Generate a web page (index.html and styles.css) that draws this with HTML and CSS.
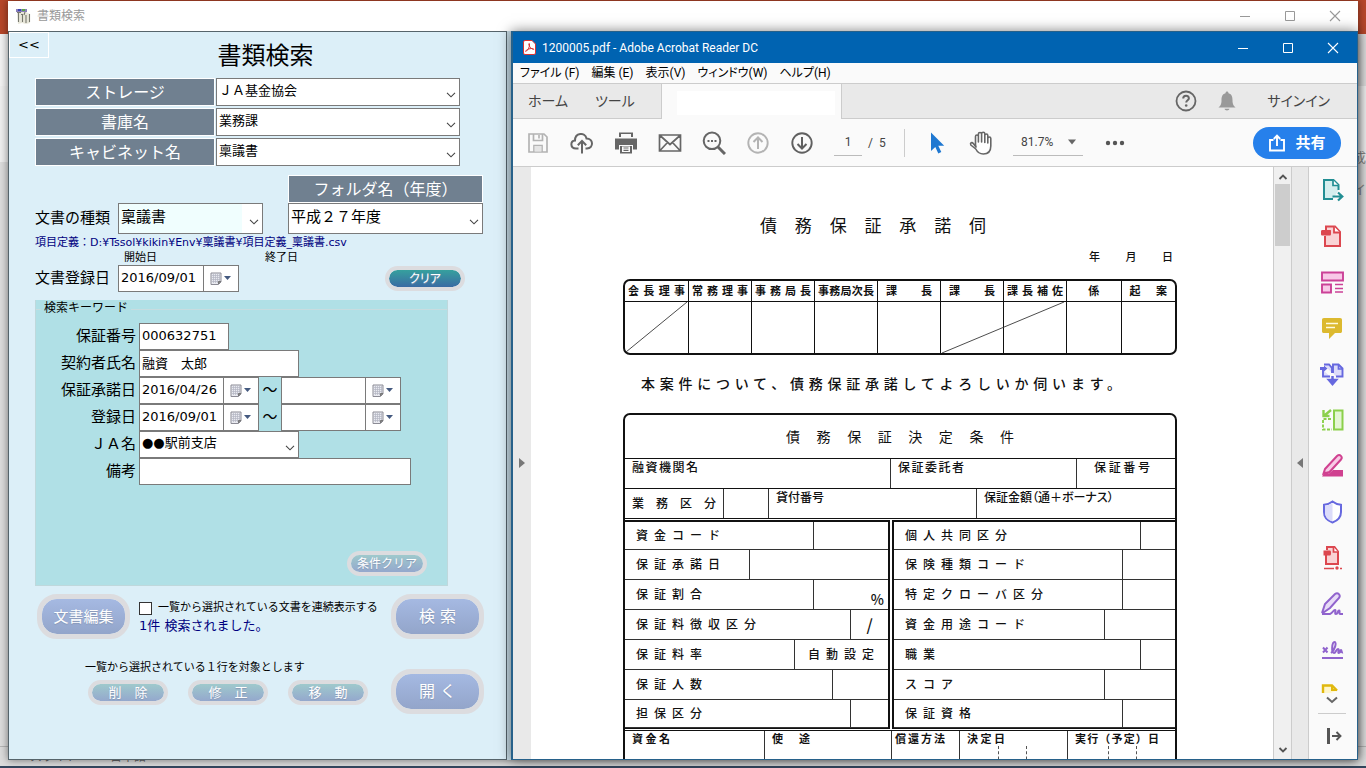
FILE: index.html
```html
<!DOCTYPE html>
<html lang="ja">
<head>
<meta charset="utf-8">
<title>書類検索</title>
<link rel="stylesheet" href="styles.css">
</head>
<body>
<svg class="defs" aria-hidden="true">
  <symbol id="chev" viewBox="0 0 10 6"><path d="M1 .8l4 4 4-4" fill="none" stroke="#444" stroke-width="1.1"/></symbol>
  <symbol id="cal" viewBox="0 0 22 13">
    <path d="M1 1h10v9l-2.500 2.500H1z" fill="#e9eaf0" stroke="#8b8b95"/><path d="M3.500 2v9M5.500 2v9M7.500 2v9M9.500 2v7M2 3.500h8M2 5.500h8M2 7.500h8M2 9.500h7" stroke="#b3b4c2" stroke-width=".7"/><path d="M11 9.500H8.500V12" fill="#777" stroke="#777"/><path d="M14 4h7l-3.500 4z" fill="#44597f"/>
  </symbol>
  <symbol id="min" viewBox="0 0 12 12"><path d="M1 6.500h10" stroke="currentColor"/></symbol>
  <symbol id="max" viewBox="0 0 12 12"><path d="M1.500 1.500h9v9h-9z" fill="none" stroke="currentColor"/></symbol>
  <symbol id="close" viewBox="0 0 12 12"><path d="M1 1l10 10M11 1L1 11" stroke="currentColor" stroke-width="1.100"/></symbol>
</svg>

<div class="desktop">
  <div class="back">
    <div class="back-title"></div>
    <div class="back-ribbon"></div>
    <div class="back-body"><span>成</span><span>イ</span></div>
    <div class="back-status"><span>スライド</span><span>日本語</span></div>
    <div class="taskbar"></div>
  </div>

  <section class="win app">
    <header class="app-bar">
      <svg class="app-icon" width="15" height="15" viewBox="0 0 15 15"><path d="M0 0h11v3H0z" fill="#8a7fb8"/><path d="M2 0h3v2H2z" fill="#3a45b5"/><path d="M6 0h3v2H6z" fill="#59a746"/><path d="M1 3h9l4 2v9l-4 1-4-1-4 1z" fill="#e8e7da"/><path d="M1 3.500h4M2.500 3.500V13M5 5.500h2M6.500 5v8M9 3l-1 3M10 6v8M13.500 5v8" stroke="#77786e" stroke-width="1.100" fill="none"/></svg>
      <span class="app-name">書類検索</span>
      <span class="controls"><svg><use href="#min"/></svg><svg><use href="#max"/></svg><svg><use href="#close"/></svg></span>
    </header>
    <form class="panel">
      <div class="head"><button type="button" class="collapse">&lt;&lt;</button><h1>書類検索</h1></div>

      <div class="places">
        <label for="storage" class="tag">ストレージ</label>
        <span class="combo"><select id="storage"><option>ＪＡ基金協会</option></select><svg><use href="#chev"/></svg></span>
        <label for="vault" class="tag">書庫名</label>
        <span class="combo"><select id="vault"><option>業務課</option></select><svg><use href="#chev"/></svg></span>
        <label for="cabinet" class="tag">キャビネット名</label>
        <span class="combo"><select id="cabinet"><option>稟議書</option></select><svg><use href="#chev"/></svg></span>
      </div>

      <div class="kind">
        <label for="kind" class="lead">文書の種類</label>
        <span class="combo tall kind-box"><select id="kind" class="mint"><option>稟議書</option></select><svg><use href="#chev"/></svg></span>
        <div class="folder">
          <label for="folder" class="tag">フォルダ名（年度）</label>
          <span class="combo tall"><select id="folder"><option>平成２７年度</option></select><svg><use href="#chev"/></svg></span>
        </div>
      </div>
      <p class="path">項目定義：D:¥Tssol¥kikin¥Env¥稟議書¥項目定義_稟議書.csv</p>
      <div class="range-heads"><span>開始日</span><span>終了日</span></div>
      <div class="reg">
        <label for="reg" class="lead">文書登録日</label>
        <span class="date"><input id="reg" value="2016/09/01"><button type="button" aria-label="カレンダー"><svg><use href="#cal"/></svg></button></span>
        <button type="button" class="pill live">クリア</button>
      </div>

      <fieldset class="keys">
        <legend>検索キーワード</legend>
        <div class="row"><label for="k1">保証番号</label><input id="k1" class="box w1" value="000632751"></div>
        <div class="row"><label for="k2">契約者氏名</label><input id="k2" class="box w2" value="融資　太郎"></div>
        <div class="row"><label for="k3">保証承諾日</label><span class="date"><input id="k3" value="2016/04/26"><button type="button" aria-label="カレンダー"><svg><use href="#cal"/></svg></button></span><span class="tilde">～</span><span class="date"><input aria-label="保証承諾日 終了"><button type="button" aria-label="カレンダー"><svg><use href="#cal"/></svg></button></span></div>
        <div class="row"><label for="k4">登録日</label><span class="date"><input id="k4" value="2016/09/01"><button type="button" aria-label="カレンダー"><svg><use href="#cal"/></svg></button></span><span class="tilde">～</span><span class="date"><input aria-label="登録日 終了"><button type="button" aria-label="カレンダー"><svg><use href="#cal"/></svg></button></span></div>
        <div class="row"><label for="k5">ＪＡ名</label><span class="combo w2"><select id="k5"><option>●●駅前支店</option></select><svg><use href="#chev"/></svg></span></div>
        <div class="row"><label for="k6">備考</label><input id="k6" class="box w3"></div>
        <button type="button" class="pill cond">条件クリア</button>
      </fieldset>

      <div class="acts">
        <button type="button" class="pill big edit">文書編集</button>
        <div class="notes">
          <label class="tick"><input type="checkbox">一覧から選択されている文書を連続表示する</label>
          <p class="found">1件 検索されました。</p>
        </div>
        <button type="button" class="pill big">検 索</button>
      </div>
      <div class="acts second">
        <div class="single">
          <p>一覧から選択されている１行を対象とします</p>
          <div class="trio"><button type="button" class="pill">削　除</button><button type="button" class="pill">修　正</button><button type="button" class="pill">移　動</button></div>
        </div>
        <button type="button" class="pill big">開 く</button>
      </div>
    </form>
  </section>

  <section class="win reader">
    <header class="reader-bar">
      <svg width="13" height="15" viewBox="0 0 13 15"><path d="M2 .5h7l3.500 3.500v9a1.500 1.500 0 01-1.500 1.500H2A1.500 1.500 0 01.5 13V2A1.500 1.500 0 012 .5z" fill="#fff" stroke="#d33"/><path d="M3 11.500c2-1.500 4-5 3.500-7.500 0-1-1-.5-.7.5.6 2.500 2.700 4.500 4.700 5 .8-.3-.2-1.200-2-1-2 .1-4 .8-5.200 1.800-.8.700-.8 1.200-.3 1.200z" fill="none" stroke="#d33"/></svg>
      <span>1200005.pdf - Adobe Acrobat Reader DC</span>
      <span class="controls"><svg><use href="#min"/></svg><svg><use href="#max"/></svg><svg><use href="#close"/></svg></span>
    </header>
    <nav class="menu"><span>ファイル (F)</span><span>編集 (E)</span><span>表示(V)</span><span>ウィンドウ(W)</span><span>ヘルプ(H)</span></nav>
    <div class="tabs">
      <div class="tab-left"><span>ホーム</span><span>ツール</span></div>
      <div class="tab-open"><div></div></div>
      <div class="tab-right">
        <svg width="22" height="22" viewBox="0 0 22 22"><circle cx="11" cy="11" r="9.500" fill="none" stroke="#666" stroke-width="1.800"/><path d="M8.200 8.600c0-3.700 5.700-3.700 5.700-.3 0 2-2.700 2-2.700 4.300" fill="none" stroke="#666" stroke-width="2"/><circle cx="11.200" cy="15.500" r="1.300" fill="#666"/></svg>
        <svg width="18" height="20" viewBox="0 0 18 20"><path d="M7.500 2.200C7.500 0 10.500 0 10.500 2.200c3.500 1 4 4 4 7 0 4 1 5.300 3 7.300H.5c2-2 3-3.300 3-7.300 0-3 .5-6 4-7zM6.500 17.800h5c-.5 2.200-4.500 2.200-5 0z" fill="#999"/></svg>
        <span>サインイン</span>
      </div>
    </div>
    <div class="tools">
      <svg viewBox="0 0 24 24"><path d="M3 3h15l3 3v15H3zM7.500 3v6.500h9V3M8 21v-6.500h8V21" fill="none" stroke="#b3b3b3" stroke-width="1.700"/><path d="M8.500 15h7v5.500h-7z" fill="#e5e5e5"/><path d="M13 4v3.500" stroke="#b3b3b3" stroke-width="1.600"/></svg>
      <svg viewBox="0 0 24 24"><path d="M8.500 17.500H6C0 17.500 0 10 5 9.500 5 2 15 .5 16.500 7.500c7 0 7.500 9.500.5 10h-1.500" fill="none" stroke="#666" stroke-width="2"/><path d="M12 22.500V10.500M7.800 14.300L12 10l4.200 4.300" fill="none" stroke="#666" stroke-width="2"/></svg>
      <svg viewBox="0 0 24 24"><path d="M5 1.500h14V6H5zM1 7.500h22v11h-4V14H5v4.500H1zM6 15h12v7.500H6z" fill="#666"/><path d="M7 3h10v4H7zM8 15.500h8V21H8z" fill="#fafafa"/><path d="M9.500 17h5M9.500 19.300h5" stroke="#666" stroke-width="1.200"/></svg>
      <svg viewBox="0 0 24 24"><path d="M1.500 4h21v16h-21zM2 4.500l10 9 10-9M2 19.500l7.500-8M22 19.500l-7.500-8" fill="none" stroke="#666" stroke-width="1.700"/></svg>
      <svg viewBox="0 0 24 24"><circle cx="10" cy="9.800" r="8.300" fill="none" stroke="#666" stroke-width="2"/><path d="M16 16l7 7" stroke="#666" stroke-width="3"/><path d="M5.500 9h2v2h-2zM9 9h2v2H9zM12.500 9h2v2h-2z" fill="#666"/></svg>
      <svg viewBox="0 0 24 24"><circle cx="12" cy="12" r="9.700" fill="none" stroke="#b3b3b3" stroke-width="1.900"/><path d="M12 18V7M7.500 11L12 6.500l4.500 4.500" fill="none" stroke="#b3b3b3" stroke-width="2"/></svg>
      <svg viewBox="0 0 24 24"><circle cx="12" cy="12" r="9.700" fill="none" stroke="#606060" stroke-width="1.900"/><path d="M12 6v11M7.500 13l4.500 4.500 4.500-4.500" fill="none" stroke="#606060" stroke-width="2"/></svg>
      <input class="page-no" aria-label="ページ" value="1"><span class="of">/&nbsp; 5</span>
      <span class="bar"></span>
      <svg viewBox="0 0 24 24"><path d="M6 1.500v18.500l4.300-4 3 6.500 3-1.400-3-6.300h5.900z" fill="#1f78d1"/></svg>
      <svg viewBox="0 0 24 24"><path d="M6.500 14V5.500c0-2 2.900-2 2.900 0V11 3c0-2 3.200-2 3.200 0v8V2.800c0-2 3.200-2 3.200 0V11.500 4.500c0-2 3-2 3 0V12 7.500c0-2 3-2 3 0V15c0 5-2.500 8-7.500 8-4.500 0-6-2-7.500-5L1.800 14c-1-2.200 1.200-3.200 2.500-1.600L7 16z" fill="#fff" stroke="#666" stroke-width="1.600" stroke-linejoin="round"/></svg>
      <span class="zoom">81.7%<svg viewBox="0 0 10 6"><path d="M1 .5h8L5 5.500z" fill="#666"/></svg></span>
      <svg viewBox="0 0 24 24"><g fill="#555"><circle cx="5" cy="12" r="2.200"/><circle cx="12" cy="12" r="2.200"/><circle cx="19" cy="12" r="2.200"/></g></svg>
      <button type="button" class="share"><svg viewBox="0 0 18 18"><path d="M5.500 6H2v10.500h14V6h-3.500M9 12V2M5.800 5L9 1.700 12.200 5" fill="none" stroke="#fff" stroke-width="1.900"/></svg>共有</button>
    </div>

    <div class="view">
      <div class="strip"><svg viewBox="0 0 6 10"><path d="M0 0v10l6-5z" fill="#777"/></svg></div>
      <main class="paper">
        <div class="sheet">
          <h2 class="spread doc-title">債務保証承諾伺</h2>
          <p class="spread doc-date">年月日</p>
          <table class="stamps">
            <colgroup><col span="7" class="c-wide"><col span="2" class="c-slim"></colgroup>
            <tr><th><div class="spread">会長理事</div></th><th><div class="spread">常務理事</div></th><th><div class="spread">事務局長</div></th><th><div class="spread">事務局次長</div></th><th><div class="spread gap">課長</div></th><th><div class="spread gap">課長</div></th><th><div class="spread">課長補佐</div></th><th>係</th><th><div class="spread gap">起案</div></th></tr>
            <tr><td class="slash"><svg viewBox="0 0 64 52" preserveAspectRatio="none"><path d="M1 51L63 0" stroke="#333" stroke-width=".9"/></svg></td><td></td><td></td><td></td><td></td><td class="slash two"><svg viewBox="0 0 128 52" preserveAspectRatio="none"><path d="M1 52L127 0" stroke="#333" stroke-width=".9"/></svg></td><td></td><td></td><td></td></tr>
          </table>
          <p class="spread ask">本案件について、債務保証承諾してよろしいか伺います。</p>

          <div class="form">
            <h3><span class="spread">債務保証決定条件</span></h3>
            <div class="line top"><div class="a1"><span class="spread s66">融資機関名</span></div><div class="a2"><span class="spread s66">保証委託者</span></div><div class="a3"><span class="spread s56">保証番号</span></div></div>
            <div class="line"><div class="b1"><span class="spread s84">業務区分</span></div><div class="b2"></div><div class="b3 up">貸付番号</div><div class="b4 up">保証金額（通＋ボーナス）</div></div>
            <div class="halves">
              <div class="half">
                <div class="item"><div><span class="spread s84">資金コード</span></div><div class="v76"></div></div>
                <div class="item"><div><span class="spread s84">保証承諾日</span></div><div class="v139"></div></div>
                <div class="item"><div><span class="spread s66">保証割合</span></div><div class="v76 pct">%</div></div>
                <div class="item"><div><span class="spread s120">保証料徴収区分</span></div><div class="v38 mid">/</div></div>
                <div class="item"><div><span class="spread s66">保証料率</span></div><div class="v94"><span class="spread s66">自動設定</span></div></div>
                <div class="item"><div><span class="spread s66">保証人数</span></div><div class="v57"></div></div>
                <div class="item"><div><span class="spread s66">担保区分</span></div><div class="v38"></div></div>
              </div>
              <div class="half right">
                <div class="item"><div><span class="spread s102">個人共同区分</span></div><div class="v38"></div></div>
                <div class="item"><div><span class="spread s120">保険種類コード</span></div><div class="v57"></div></div>
                <div class="item"><div><span class="spread s138">特定クローバ区分</span></div><div class="v57"></div></div>
                <div class="item"><div><span class="spread s120">資金用途コード</span></div><div class="v76"></div></div>
                <div class="item"><div><span class="spread s30">職業</span></div><div class="v38"></div></div>
                <div class="item"><div><span class="spread s48">スコア</span></div><div class="v76"></div></div>
                <div class="item"><div><span class="spread s66">保証資格</span></div><div class="v57"></div></div>
              </div>
            </div>
            <div class="line last"><div class="d1"><span class="spread s38">資金名</span></div><div class="d2"><span class="spread s38">使途</span></div><div class="d3"><span class="spread s50">償還方法</span></div><div class="d4"><span class="spread s38">決定日</span><i></i><i></i></div><div class="d5"><span class="spread s84">実行（予定）日</span><i></i><i></i></div></div>
          </div>
        </div>
      </main>
      <div class="scroll"><svg viewBox="0 0 10 6"><path d="M1.500 5L5 1.500 8.500 5" fill="none" stroke="#555" stroke-width="1.800"/></svg><div class="thumb"></div><svg viewBox="0 0 10 6"><path d="M1.500 1L5 4.500 8.500 1" fill="none" stroke="#555" stroke-width="1.800"/></svg></div>
      <div class="strip edge"><svg viewBox="0 0 6 10"><path d="M6 0v10L0 5z" fill="#777"/></svg></div>
      <aside class="rail">
        <div class="rail-list">
          <svg viewBox="0 0 24 24"><path d="M13 21H4V2h9.500l5 5v5" fill="#d5eeee" stroke="#228e93" stroke-width="2"/><path d="M13 2v5.500h5.500" fill="#fff" stroke="#228e93" stroke-width="1.700"/><path d="M12.500 18.500h9M18 14.500l4.300 4-4.300 4" fill="none" stroke="#228e93" stroke-width="2.200"/></svg>
          <svg viewBox="0 0 24 24"><path d="M5 12v10h15V8l-5-5.500H6V7" fill="#f9d3d5" stroke="#dc474f" stroke-width="2"/><path d="M14 2.500V8.500h6" fill="#fff" stroke="#dc474f" stroke-width="1.800"/><path d="M2.500 6H9c2 0 2-.5 2 2.500s0 3-2 3H2.500C1.500 11.500 1 11 1 10V7.500C1 6.500 1.500 6 2.500 6z" fill="#dc474f"/></svg>
          <svg viewBox="0 0 24 24"><path d="M2 2.500h21v8H2zM2 14.500h9v8H2z" fill="#f8c8e7" stroke="#cb4197" stroke-width="1.900"/><path d="M15 14.500h8M15 18.500h8M15 22h8" stroke="#cb4197" stroke-width="1.300"/></svg>
          <svg viewBox="0 0 24 24"><path d="M4 2h16c1.500 0 2 .7 2 2v11c0 1.400-.5 2-2 2h-5l-6 6v-6H4c-1.500 0-2-.6-2-2V4c0-1.300.5-2 2-2z" fill="#dcb92f"/><path d="M6 7.500h12M6 11.500h9" stroke="#fffbe0" stroke-width="1.600"/></svg>
          <svg viewBox="0 0 24 24"><path d="M3 8v6.500h7M4 2.500h5l3 3.500v5M13 11V2.500h5.500l4 4v8H16" fill="#dcdcfa" stroke="#6668df" stroke-width="1.900"/><path d="M0 5h4V3.500l3.500 3-3.500 3V8H0z" fill="#6668df"/><path d="M18.500 3v4h4" fill="none" stroke="#6668df" stroke-width="1.700"/><path d="M12.500 14v5M9 18l3.500 4 3.500-4z" fill="#6668df" stroke="#6668df" stroke-width="2.500"/></svg>
          <svg viewBox="0 0 24 24"><path d="M14 2.500h8.500v19H14z" fill="#e4f6d4" stroke="#8bd04b" stroke-width="2"/><path d="M11 11H3v10.500h9" fill="none" stroke="#8bd04b" stroke-width="1.900" stroke-dasharray="3 1.500"/><path d="M11 2L5 7M3.500 2v6h6" fill="none" stroke="#8bd04b" stroke-width="2.400"/></svg>
          <svg viewBox="0 0 24 24"><path d="M5 15L17 2c3-2.500 6 1 4 3.500L9.500 18l-6 1.500z" fill="#f8cae5" stroke="#d04190" stroke-width="2"/><path d="M2 22.500l3-5 4 2 4-3.500h10v6.500z" fill="#d04190"/></svg>
          <svg viewBox="0 0 24 24"><path d="M12.500 1.500c2.500 2 5 3 8.500 3.300V12c0 5.500-3 8.500-8.500 10.500C7 20.500 4 17.500 4 12V4.800c3.500-.3 6-1.300 8.500-3.300z" fill="#fff" stroke="#6668df" stroke-width="2"/><path d="M12.500 3C10.500 4.500 8 5.500 5 5.700V12c0 5 2.500 7.500 7.500 9.500z" fill="#dcdcfa"/></svg>
          <svg viewBox="0 0 24 24"><path d="M6 9v9h12V5.500L14.500 1H7v3" fill="#f9d3d5" stroke="#dc474f" stroke-width="2"/><path d="M13.500 1v5H18" fill="#fff" stroke="#dc474f" stroke-width="1.700"/><path d="M3.500 4.500h6c1 0 1.500.5 1.500 2.500s-.5 2.500-1.500 2.500h-6z" fill="#dc474f"/><path d="M4 22.500h10M20 22.500h2" stroke="#dc474f" stroke-width="1.700"/><circle cx="17" cy="22" r="1.700" fill="#dc474f"/></svg>
          <svg viewBox="0 0 24 24"><path d="M2 21l3-9L15 2c3-2 6 1 4 4L10 16l-8 5.500" fill="#e7dbf7" stroke="#9063cd" stroke-width="2"/><path d="M2 22h8c3-1 3-4 5-4 1.500 0-1 4 1 4s1.500-3.500 3-3.500-.5 3.500 1 3.500h3" fill="none" stroke="#9063cd" stroke-width="2"/></svg>
          <svg viewBox="0 0 24 24"><path d="M3 9.500l4.500 5M7.500 9.500l-4.500 5M11 15c4-3 6-11 3.500-11S11 15 14 15c2 0 2-4 4-4s-1 4 1 4 1-3 2-3 0 3 2 2.500M2 20h21" fill="none" stroke="#9063cd" stroke-width="2"/></svg>
          <svg viewBox="0 0 24 24"><path d="M3 12V1.500h9l5 5" fill="#fff6c9" stroke="#e0b80e" stroke-width="2.400"/><path d="M12 1v5h5" fill="none" stroke="#e0b80e" stroke-width="2"/></svg>
        </div>
        <div class="rail-foot">
          <svg viewBox="0 0 12 8"><path d="M1 1.500l5 4.500 5-4.500" fill="none" stroke="#666" stroke-width="2"/></svg>
          <hr>
          <svg class="out" viewBox="0 0 16 18"><path d="M2.500 1v16" stroke="#555" stroke-width="3"/><path d="M6 9h8M10.500 5l4 4-4 4" fill="none" stroke="#555" stroke-width="1.900"/></svg>
        </div>
      </aside>
    </div>
  </section>
</div>
</body>
</html>
```
FILE: styles.css
```css
* { box-sizing: border-box; }
body, h1, h2, h3, p, fieldset { margin: 0; padding: 0; }
body {
  font-family: "DejaVu Sans", "Noto Sans CJK JP", sans-serif;
  font-size: 13px;
  line-height: 16px;
  color: #000;
}
h1, h2, h3 { font-weight: 400; }
button, input, select { font: inherit; color: inherit; margin: 0; padding: 0; border-radius: 0; }
svg { display: block; flex: none; }
.defs { position: absolute; width: 0; height: 0; }

/* desktop and the window behind */
.desktop { position: relative; height: 100vh; overflow: hidden; background: #e0e0e0; }
.back { height: 100%; display: flex; flex-direction: column; }
.back-title { height: 34px; background: #b7472a; }
.back-ribbon { height: 52px; background: linear-gradient(to right, #f3f3f3 50%, #ddd 50%); }
.back-body { flex: 1; display: flex; flex-direction: column; align-items: flex-end; gap: 16px; padding-top: 64px; color: #888; background: linear-gradient(#efefef 76px, #ddd 76px); }
.back-body span { width: 13px; }
.back-status { height: 20px; display: flex; gap: 32px; padding: 0 30px; border-top: 1px solid #b5b5b5; background: #dcdcdc; color: #666; font-size: 12px; line-height: 20px; }
.taskbar { height: 2px; background: #34475e; }

.win { position: absolute; display: flex; flex-direction: column; }
.controls { margin-left: auto; display: flex; gap: 33px; }
.controls svg { width: 12px; height: 12px; }

/* search application */
.app { left: 8px; right: 8px; top: 1px; bottom: 8px; background: #c5d9e3; box-shadow: 0 0 8px rgba(0, 0, 0, .5); }
.app-bar { height: 30px; display: flex; align-items: center; gap: 6px; padding: 0 17px 0 8px; background: #fff; color: #999; font-size: 12px; }
.panel { flex: 1; width: 499px; border: 1px solid #56646b; background: #dceff8; }
.head { display: flex; align-items: flex-start; padding-right: 24px; }
.collapse { width: 40px; height: 26px; border: 1px solid #fff; background: none; }
.head h1 { flex: 1; height: 46px; text-align: center; font-size: 24px; line-height: 48px; }

.tag { height: 28px; border: 1px solid #fff; background: #708090; color: #fff; font-size: 16px; line-height: 28px; text-align: center; }
.combo { position: relative; display: block; height: 28px; }
.combo select { appearance: none; width: 100%; height: 100%; padding: 0 20px 3px 2px; border: 1px solid #7a7a7a; background: #fff; }
.combo svg { position: absolute; right: 4px; top: 50%; width: 10px; height: 6px; pointer-events: none; }
.combo.tall { height: 31px; }
.tall select { font-size: 15px; }
.combo .mint { background: linear-gradient(to left, #fff 20px, #f0fefe 20px); }
.places { display: grid; grid-template-columns: 180px 244px; column-gap: 1px; row-gap: 2px; padding-left: 26px; }
.kind { display: flex; align-items: flex-end; padding: 9px 0 0 26px; }
.lead { width: 83px; font-size: 15px; line-height: 31px; }
.kind-box { width: 145px; }
.folder { width: 195px; margin-left: 25px; }
.folder .tag { display: block; }
.path { padding-left: 26px; color: #000080; font-size: 11px; line-height: 18px; }
.range-heads { display: flex; gap: 108px; padding-left: 115px; font-size: 11px; line-height: 12px; }
.range-heads span { width: 33px; }
.reg { display: flex; align-items: center; height: 29px; padding-left: 26px; }
.date { display: flex; width: 121px; height: 27px; border: 1px solid #7a7a7a; background: #fff; }
.date input { flex: 1; min-width: 0; padding: 0 0 2px 2px; border: 0; background: none; }
.date button { width: 35px; border: 0; border-left: 1px solid #7a7a7a; background: none; display: flex; align-items: center; justify-content: center; }
.date svg { width: 22px; height: 13px; }

.pill { width: 80px; height: 25px; border: 4px solid #dcdcdf; border-radius: 13px; background: linear-gradient(#9fc9cc, #94a8cd) padding-box; color: #fff; font-size: 13px; line-height: 16px; white-space: nowrap; text-shadow: 0 1px 1px #8797b5; }
.pill.live { margin-left: 146px; background: linear-gradient(#36a09e, #3a6ba3) padding-box; font-size: 12px; font-feature-settings: "palt"; }
.pill.big { width: 93px; height: 45px; border-width: 5px; border-radius: 20px; background: linear-gradient(#a5b9e2, #93a5ca) padding-box; font-size: 16px; }

.keys { position: relative; width: 413px; height: 286px; margin: 7px 0 0 26px; padding-top: 23px; border: 0; background: linear-gradient(#c8dcdf, #c8dcdf) 0 9px / 100% 1px no-repeat, #b0e0e6; box-shadow: inset 0 -1px #bfd8dc, inset 1px 0 #bfd8dc, inset -1px 0 #bfd8dc; }
.keys legend { position: absolute; left: 6px; top: 0; padding: 0 3px; background: #b0e0e6; font-size: 12px; line-height: 17px; }
.row { display: flex; height: 27px; }
.row label { width: 101px; margin-right: 3px; text-align: right; font-size: 15px; line-height: 27px; }
.row .date { width: 120px; }
.row .combo { height: 27px; }
.box { height: 27px; padding: 0 2px 2px; border: 1px solid #7a7a7a; background: #fff; }
.w1 { width: 90px; }
.w2 { width: 160px; }
.w3 { width: 272px; }
.tilde { width: 22px; text-align: center; font-size: 15px; line-height: 27px; }
.cond { display: block; margin: 66px 0 0 312px; padding: 0; font-size: 12px; }

.acts { display: flex; align-items: flex-start; padding: 8px 22px 0 28px; }
.acts > .big { margin-left: auto; }
.acts > .edit { margin: 0 9px 0 0; font-size: 15px; }
.notes { padding-top: 6px; font-size: 11px; }
.tick { display: flex; align-items: center; gap: 6px; }
.tick input { appearance: none; width: 13px; height: 13px; border: 1px solid #333; background: #fff; }
.found { color: #000080; font-size: 13px; line-height: 20px; }
.second { padding: 30px 22px 0 76px; }
.single { display: flex; flex-direction: column; gap: 4px; margin-top: -9px; font-size: 11px; }
.trio { display: flex; gap: 20px; padding-left: 3px; }

/* PDF reader */
.reader { left: 511px; right: 8px; top: 31px; bottom: 8px; border: 1px solid #27618a; border-left-width: 2px; background: #fafafa; box-shadow: 0 0 12px rgba(0, 0, 0, .5); font-family: Roboto, "Noto Sans CJK JP", sans-serif; }
.reader-bar { height: 31px; flex: none; display: flex; align-items: center; gap: 6px; padding: 0 18px 0 10px; background: #0063b1; color: #fff; font-size: 12px; }
.menu { height: 21px; flex: none; display: flex; gap: 12px; padding-left: 7px; border-bottom: 1px solid #ccc; font-size: 12px; line-height: 20px; font-feature-settings: "palt"; white-space: nowrap; }
.tabs { height: 35px; flex: none; display: flex; background: #e9e9e9; color: #444; font-size: 14px; font-feature-settings: "palt"; }
.tab-left { width: 149px; display: flex; align-items: center; gap: 27px; padding-left: 15px; border: solid #ccc; border-width: 0 1px 1px 0; }
.tab-open { width: 180px; padding: 7px 6px 5px 15px; border-right: 1px solid #ccc; background: #fafafa; }
.tab-open div { height: 24px; background: #fff; }
.tab-right { flex: 1; display: flex; align-items: center; justify-content: flex-end; gap: 21px; padding-right: 27px; border-bottom: 1px solid #ccc; }
.tab-right span { margin-left: 10px; }
.tools { height: 48px; flex: none; display: flex; align-items: center; gap: 20px; padding: 0 16px 0 13px; border-bottom: 1px solid #ccc; color: #444; font-size: 12px; }
.tools > svg { width: 24px; height: 24px; }
.page-no { width: 28px; height: 27px; border: 0; border-bottom: 1px solid #bbb; background: none; text-align: center; }
.of { width: 16px; margin-left: -14px; white-space: nowrap; }
.bar { width: 1px; height: 28px; background: #ccc; }
.zoom { display: flex; align-items: center; justify-content: space-between; width: 70px; height: 27px; padding: 0 6px 0 8px; border-bottom: 1px solid #bbb; }
.zoom svg { width: 10px; height: 6px; }
.share { display: flex; align-items: center; justify-content: center; gap: 9px; width: 88px; height: 32px; margin-left: auto; border: 0; border-radius: 16px; background: #2680eb; color: #fff; font-size: 15px; font-weight: 700; }
.share svg { width: 18px; height: 18px; }

.view { flex: 1; min-height: 0; display: flex; background: #fff; }
.strip { width: 18px; display: flex; align-items: center; justify-content: center; background: #e9e9e9; }
.strip svg { width: 6px; height: 10px; }
.paper { flex: 1; overflow: hidden; padding-right: 4px; }
.scroll { width: 18px; display: flex; flex-direction: column; align-items: center; padding: 7px 0 6px; border-left: 1px solid #ccc; background: #f0f0f0; }
.scroll svg { width: 10px; height: 6px; }
.scroll svg:last-child { margin-top: auto; }
.thumb { width: 15px; height: 62px; margin-top: 4px; background: #cdcdcd; }
.edge { width: 18px; border: solid #ccc; border-width: 0 1px; }
.rail { width: 48px; display: flex; flex-direction: column; align-items: center; padding-right: 2px; background: #fafafa; }
.rail-list { flex: 1; min-height: 0; overflow: hidden; display: flex; flex-direction: column; gap: 22px; padding-top: 11px; }
.rail-list svg { width: 24px; height: 24px; }
.rail-foot { height: 66px; display: flex; flex-direction: column; align-items: center; }
.rail-foot svg { width: 12px; height: 8px; margin-top: 3px; }
.rail-foot hr { width: 28px; height: 1px; margin: 9px 0; border: 0; background: #ccc; }
.rail-foot .out { width: 16px; height: 18px; margin: 4px 0 0 4px; }

/* scanned sheet */
.sheet { width: 554px; margin: 0 auto; padding-top: 48px; font-family: "Noto Sans CJK JP", sans-serif; font-size: 12px; font-weight: 500; color: #111; }
.spread { display: block; text-align: justify; text-align-last: justify; white-space: nowrap; }
.doc-title { width: 226px; margin-left: 137px; font-size: 17px; line-height: 20px; }
.doc-date { width: 84px; margin: 13px 4px 0 auto; font-size: 11px; line-height: 16px; }
.stamps { width: 100%; margin-top: 15px; table-layout: fixed; border: 2px solid #111; border-radius: 7px; border-spacing: 0; }
.c-wide { width: 63px; }
.stamps th { height: 21px; padding: 0 3px 2px; border-bottom: 1px solid #111; font-size: 11px; line-height: 16px; }
.stamps th + th, .stamps td + td { border-left: 1px solid #111; }
.stamps td { height: 51px; padding: 0; }
.spread.gap { padding: 0 5px; }
.slash { position: relative; }
.slash svg { position: absolute; left: 0; top: 0; width: 100%; height: 100%; }
.slash.two svg { width: 200%; }
.ask { width: 480px; margin: 18px 0 0 18px; font-size: 14px; line-height: 20px; }
.form { margin-top: 20px; border: 2px solid #111; border-radius: 7px 7px 0 0; }
.form h3 { height: 44px; border-bottom: 1px solid #111; font-size: 14px; line-height: 42px; }
.form h3 span { width: 228px; margin-left: 161px; }
.line { display: flex; height: 30px; border-bottom: 1px solid #111; line-height: 28px; }
.line > div { padding-left: 7px; }
.line > div + div { border-left: 1px solid #333; }
.line.top, .line.last, .line .up { line-height: 15px; }
.a1 { width: 265px; }
.a2 { width: 186px; }
.line .a3 { flex: 1; padding-left: 17px; }
.b1 { width: 98px; }
.b2 { width: 45px; }
.b3 { width: 208px; }
.b4 { flex: 1; font-size: 12px; white-space: nowrap; font-feature-settings: "palt"; }
.halves { display: flex; gap: 2px; padding: 1px 0; border-bottom: 1px solid #111; }
.half { width: 265px; border: solid #111; border-width: 2px 2px 1px 0; }
.half.right { flex: 1; border-width: 2px 0 1px 2px; }
.item { display: flex; height: 30px; border-bottom: 1px solid #333; line-height: 28px; }
.item:first-child, .item:last-child { height: 28px; line-height: 26px; }
.item > div:first-child { flex: 1; padding-left: 11px; }
.item > div:last-child { border-left: 1px solid #333; }
.v38 { width: 38px; }
.v57 { width: 56px; }
.v76 { width: 75px; }
.right .v38 { width: 35px; }
.right .v57 { width: 53px; }
.right .v76 { width: 71px; }
.v94 { width: 94px; padding-left: 13px; }
.v139 { width: 139px; }
.pct { padding: 5px 4px 0 0; text-align: right; font-size: 14px; }
.mid { text-align: center; font-size: 16px; }
.s30 { width: 30px; }
.s38 { width: 38px; }
.s48 { width: 48px; }
.s50 { width: 50px; }
.s56 { width: 56px; }
.s66 { width: 66px; }
.s84 { width: 84px; }
.s102 { width: 102px; }
.s120 { width: 120px; }
.s138 { width: 138px; }
.last { height: 40px; font-size: 11px; font-weight: 700; }
.d1 { width: 139px; }
.d2 { width: 127px; }
.line .d3 { width: 68px; padding-left: 3px; }
.d4 { width: 108px; }
.d5 { flex: 1; }
.last i { display: inline-block; width: 1px; height: 24px; margin-left: 27px; border-left: 1px dashed #555; }
.d4 i:first-of-type { margin-left: 31px; }
.d5 i:first-of-type { margin-left: 33px; }
```
